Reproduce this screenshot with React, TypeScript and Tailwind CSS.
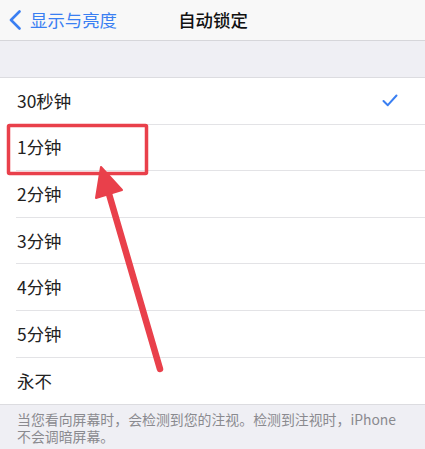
const options = ["30秒钟", "1分钟", "2分钟", "3分钟", "4分钟", "5分钟", "永不"];

const font = {
  fontFamily: '"PingFang SC", "Noto Sans CJK SC", "Noto Sans", sans-serif',
};

export default function App() {
  const selected = 0;

  return (
    <div className="relative w-[425px] h-[449px] overflow-hidden bg-[#efeff4]" style={font}>
      {/* nav bar */}
      <div className="relative h-[41px] bg-[#f8f8f8] border-b border-[#d6d6da] flex items-center">
        <button className="flex items-center pl-[8px] text-[#3a7ff2]">
          <svg width="14" height="20" viewBox="0 0 14 20">
            <path
              d="M11.5 1.5 L3 10 L11.5 18.5"
              fill="none"
              stroke="#3a7ff2"
              strokeWidth="2.6"
              strokeLinecap="round"
              strokeLinejoin="round"
            />
          </svg>
          <span className="text-[17.4px] leading-none ml-[8px]">显示与亮度</span>
        </button>
        <div className="absolute inset-x-0 top-0 h-full flex items-center justify-center pointer-events-none">
          <span className="text-[17.4px] font-medium text-[#111] leading-none ml-[1px]">自动锁定</span>
        </div>
      </div>

      <div className="h-[36px]" />

      {/* options list */}
      <div className="bg-white border-y border-[#dcdce0]">
        {options.map((label, i) => (
          <div key={label} className="pl-4">
            <div
              className={`h-[46.6px] flex items-center justify-between pr-[27px] ${
                i < options.length - 1 ? "border-b border-[#e3e3e6]" : ""
              }`}
            >
              <span className="text-[17.4px] text-[#222] pl-[1px]">{label}</span>
              {i === selected && (
                <svg width="16" height="13" viewBox="0 0 16 13">
                  <path
                    d="M1.5 7 L5.8 11.2 L14.5 1.5"
                    fill="none"
                    stroke="#3a7ff2"
                    strokeWidth="2"
                    strokeLinecap="round"
                    strokeLinejoin="round"
                  />
                </svg>
              )}
            </div>
          </div>
        ))}
      </div>

      <p className="pl-[17px] pt-[6px] text-[13.9px] leading-[17px] text-[#8a8a8f] whitespace-nowrap">
        当您看向屏幕时，会检测到您的注视。检测到注视时，iPhone
        <br />
        不会调暗屏幕。
      </p>

      {/* red annotation: box + arrow */}
      <svg className="absolute left-0 top-0 pointer-events-none" width="425" height="449">
        <rect x="8.5" y="125.5" width="138" height="48" fill="none" stroke="#e9404b" strokeWidth="3.5" rx="1" />
        <line x1="109" y1="194" x2="160" y2="369" stroke="#e9404b" strokeWidth="6.5" strokeLinecap="round" />
        <polygon points="101,167 122,190 96,198" fill="#e9404b" strokeLinejoin="round" stroke="#e9404b" strokeWidth="2" />
      </svg>
    </div>
  );
}
